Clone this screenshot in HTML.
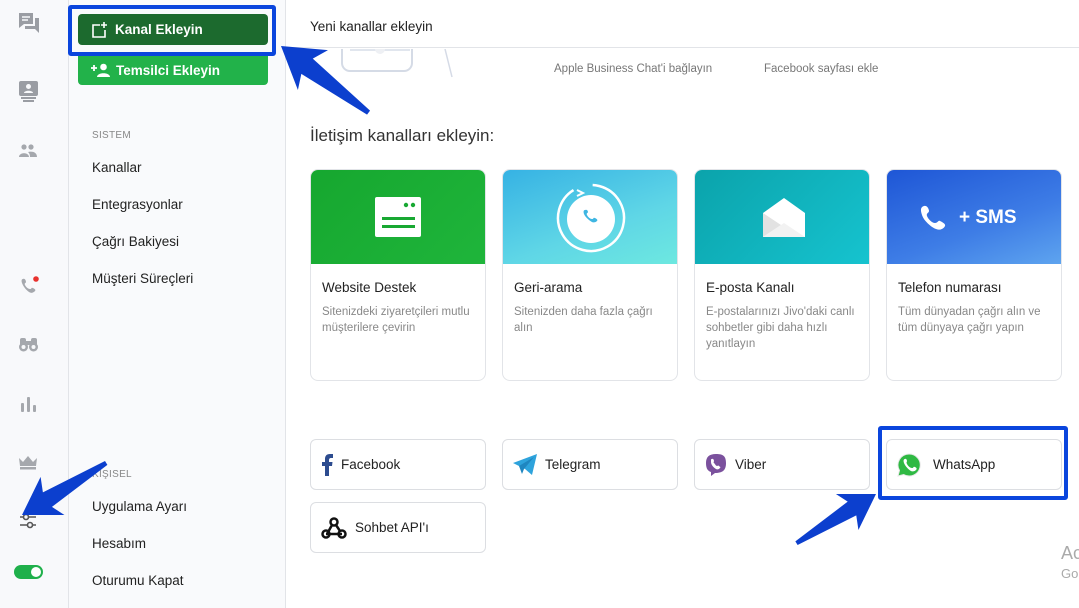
<!DOCTYPE html>
<html><head><meta charset="utf-8"><style>
*{box-sizing:border-box;margin:0;padding:0}
body{width:1079px;height:608px;overflow:hidden;position:relative;background:#fff;font-family:"Liberation Sans",sans-serif;color:#222}
.abs{position:absolute}
#rail{left:0;top:0;width:69px;height:608px;background:#f8f9fb;border-right:1px solid #e2e4e8}
#side{left:69px;top:0;width:217px;height:608px;background:#f9fafc;border-right:1px solid #e2e4e8}
.menu{position:absolute;left:23px;font-size:13.5px;color:#222}
.sec{position:absolute;left:23px;font-size:10px;color:#888;letter-spacing:.3px}
.btn{position:absolute;left:9px;width:190px;height:31px;border-radius:4px;color:#fff;font-weight:bold;font-size:13.5px;display:flex;align-items:center;padding-left:13px}
.card{position:absolute;top:169px;width:176px;height:212px;border:1px solid #e2e4e8;border-radius:8px;overflow:hidden;background:#fff}
.card .hd{height:94px;position:relative}
.card .t{position:absolute;left:11px;top:110px;font-size:13.5px;color:#222}
.card .d{position:absolute;left:11px;top:134px;font-size:11.5px;color:#888;line-height:16px;width:150px}
.sb{position:absolute;width:176px;height:51px;border:1px solid #dcdee2;border-radius:6px;background:#fff;display:flex;align-items:center;font-size:13.5px;color:#222}
.sb svg{margin:0 8px 0 10px}
</style></head><body>
<div id="rail" class="abs">
<svg class="abs" style="left:18px;top:12px" width="22" height="22" viewBox="0 0 22 22"><path d="M1 1h14v11H6l-5 4z" fill="#9a9da3"/><path d="M17 6h4v15l-4-4H7v-3h10z" fill="#9a9da3"/><path d="M4 5h8M4 8h6" stroke="#f8f9fb" stroke-width="1.5"/></svg>
<svg class="abs" style="left:19px;top:81px" width="19" height="22" viewBox="0 0 19 22"><rect x="0" y="0" width="19" height="15" rx="2" fill="#9a9da3"/><circle cx="9.5" cy="5.5" r="2.5" fill="#f8f9fb"/><path d="M5 12c0-3 9-3 9 0z" fill="#f8f9fb"/><rect x="2" y="16" width="15" height="2" fill="#9a9da3"/><rect x="4" y="19" width="11" height="2" fill="#9a9da3"/></svg>
<svg class="abs" style="left:19px;top:144px" width="18" height="14" viewBox="0 0 18 14"><circle cx="5" cy="3" r="2.6" fill="#a5a8ad"/><circle cx="12" cy="3" r="2.6" fill="#a5a8ad"/><path d="M0 13c0-5 10-5 10 0zM11 13c0-3-1-4-2-5 4-1 9 0 9 5z" fill="#a5a8ad"/></svg>
<svg class="abs" style="left:20px;top:276px" width="20" height="20" viewBox="0 0 20 20"><path d="M3 3c2-1 3 2 3 3s-2 1-1 3 3 4 5 4 1-2 3-1 3 2 2 3-3 3-6 1S3 10 2 7s0-4 1-4z" fill="#a5a8ad"/><circle cx="16" cy="3" r="2.8" fill="#e8322e"/></svg>
<svg class="abs" style="left:19px;top:337px" width="19" height="15" viewBox="0 0 19 15"><circle cx="4.5" cy="10" r="4.5" fill="#a5a8ad"/><circle cx="14.5" cy="10" r="4.5" fill="#a5a8ad"/><rect x="1" y="1" width="6" height="8" rx="2" fill="#a5a8ad"/><rect x="12" y="1" width="6" height="8" rx="2" fill="#a5a8ad"/><rect x="7" y="4" width="5" height="4" fill="#a5a8ad"/><circle cx="4.5" cy="10" r="2" fill="#f8f9fb"/><circle cx="14.5" cy="10" r="2" fill="#f8f9fb"/></svg>
<svg class="abs" style="left:20px;top:397px" width="17" height="15" viewBox="0 0 17 15"><rect x="1" y="6" width="3" height="9" rx="1" fill="#a5a8ad"/><rect x="7" y="0" width="3" height="15" rx="1" fill="#a5a8ad"/><rect x="13" y="8" width="3" height="7" rx="1" fill="#a5a8ad"/></svg>
<svg class="abs" style="left:19px;top:456px" width="18" height="14" viewBox="0 0 18 14"><path d="M0 2l4 4 5-6 5 6 4-4-1 8H1z" fill="#a5a8ad"/><rect x="1" y="11" width="16" height="2.5" fill="#a5a8ad"/></svg>
<svg class="abs" style="left:19px;top:512px" width="18" height="18" viewBox="0 0 18 18"><path d="M1 5h16M1 13h16" stroke="#555" stroke-width="1.6"/><circle cx="7" cy="5" r="2.5" fill="#f8f9fb" stroke="#555" stroke-width="1.6"/><circle cx="11" cy="13" r="2.5" fill="#f8f9fb" stroke="#555" stroke-width="1.6"/></svg>
<div class="abs" style="left:14px;top:565px;width:29px;height:14px;border-radius:7px;background:#1fb04b"><div class="abs" style="right:2px;top:2px;width:10px;height:10px;border-radius:5px;background:#fff"></div></div>
</div>
<div id="side" class="abs">
<div class="btn" style="top:14px;background:#1c6a2e"><svg width="16" height="16" viewBox="0 0 16 16" style="margin-right:8px"><path d="M9 3H2v12h12V8" fill="none" stroke="#fff" stroke-width="1.6"/><path d="M13 0v6M10 3h6" stroke="#fff" stroke-width="1.6"/></svg>Kanal Ekleyin</div>
<div class="btn" style="top:55px;height:30px;background:#22b24a;border-radius:0 0 4px 4px"><svg width="20" height="14" viewBox="0 0 20 14" style="margin-right:5px"><path d="M0 5h6M3 2v6" stroke="#fff" stroke-width="1.8"/><circle cx="12.5" cy="4" r="3.3" fill="#fff"/><path d="M6 14c0-5 13-5 13 0z" fill="#fff"/></svg>Temsilci Ekleyin</div>
<div class="sec" style="top:130px">SISTEM</div>
<div class="menu" style="top:160px">Kanallar</div>
<div class="menu" style="top:197px">Entegrasyonlar</div>
<div class="menu" style="top:234px">Çağrı Bakiyesi</div>
<div class="menu" style="top:271px">Müşteri Süreçleri</div>
<div class="sec" style="top:469px">KIŞISEL</div>
<div class="menu" style="top:499px">Uygulama Ayarı</div>
<div class="menu" style="top:536px">Hesabım</div>
<div class="menu" style="top:573px">Oturumu Kapat</div>
</div>
<!-- main -->
<div class="abs" style="left:286px;top:0;width:793px;height:48px;border-bottom:1px solid #e2e4e8;background:#fff"></div>
<div class="abs" style="left:310px;top:19px;font-size:13.5px;color:#222">Yeni kanallar ekleyin</div>
<svg class="abs" style="left:330px;top:49px" width="140" height="30" viewBox="0 0 140 30"><rect x="12" y="-12" width="70" height="34" rx="8" fill="none" stroke="#d5dbe6" stroke-width="2"/><rect x="20" y="0" width="60" height="2" fill="#e1e6ee"/><circle cx="50" cy="0" r="5" fill="#eef0f4"/><path d="M115 0l7 28" stroke="#d5dbe6" stroke-width="1.5"/></svg>
<div class="abs" style="left:554px;top:63px;font-size:11.5px;color:#777">Apple Business Chat'i bağlayın</div>
<div class="abs" style="left:764px;top:63px;font-size:11.5px;color:#777">Facebook sayfası ekle</div>
<div class="abs" style="left:310px;top:126px;font-size:17px;color:#333">İletişim kanalları ekleyin:</div>

<div class="card" style="left:310px"><div class="hd" style="background:linear-gradient(135deg,#16a72f,#1fb53b)">
<svg class="abs" style="left:64px;top:27px" width="46" height="41" viewBox="0 0 46 41"><rect width="46" height="40" rx="2" fill="#fff"/><circle cx="31" cy="8" r="2.2" fill="#18a832"/><circle cx="38" cy="8" r="2.2" fill="#18a832"/><rect x="7" y="20" width="33" height="3" fill="#18a832"/><rect x="7" y="28" width="33" height="3" fill="#18a832"/></svg></div>
<div class="t">Website Destek</div><div class="d">Sitenizdeki ziyaretçileri mutlu müşterilere çevirin</div></div>

<div class="card" style="left:502px"><div class="hd" style="background:linear-gradient(160deg,#36b2e4,#5fd6e6 60%,#6de8e0)">
<svg class="abs" style="left:52px;top:12px" width="72" height="72" viewBox="0 0 72 72"><circle cx="36" cy="36" r="33" fill="none" stroke="#fff" stroke-width="2.5" stroke-dasharray="180 20" transform="rotate(-75 36 36)"/><path d="M22 8l6 3-6 3" fill="none" stroke="#fff" stroke-width="2"/><circle cx="36" cy="37" r="24" fill="#fff"/><path d="M30 28c2-1 3 1 3 2s-2 1-1 3 3 4 5 4 1-2 3-1 3 2 2 3-3 2-5 1-7-5-8-8 0-4 1-4z" fill="#3fb6e2"/></svg></div>
<div class="t">Geri-arama</div><div class="d">Sitenizden daha fazla çağrı alın</div></div>

<div class="card" style="left:694px"><div class="hd" style="background:linear-gradient(135deg,#0ba3ab,#16c3cf)">
<svg class="abs" style="left:66px;top:27px" width="46" height="42" viewBox="0 0 46 42"><path d="M2 16L23 1l21 15v24H2z" fill="#fff"/><path d="M2 16l18 12-18 12z" fill="#e2e2e2"/><path d="M2 40l21-14 21 14z" fill="#f2f2f2"/></svg></div>
<div class="t">E-posta Kanalı</div><div class="d">E-postalarınızı Jivo'daki canlı sohbetler gibi daha hızlı yanıtlayın</div></div>

<div class="card" style="left:886px"><div class="hd" style="background:linear-gradient(160deg,#1e56d6,#3e7de6 60%,#5ea4ef)">
<svg class="abs" style="left:33px;top:34px" width="28" height="28" viewBox="0 0 28 28"><path d="M4 2c3-1 5 3 5 5s-3 2-2 5 5 7 8 7 3-3 5-2 6 3 5 5-4 5-9 3S4 17 2 11 1 3 4 2z" fill="#fff"/></svg>
<div class="abs" style="left:72px;top:37px;color:#fff;font-weight:bold;font-size:19px">+ SMS</div></div>
<div class="t">Telefon numarası</div><div class="d">Tüm dünyadan çağrı alın ve tüm dünyaya çağrı yapın</div></div>

<div class="sb" style="left:310px;top:439px"><svg width="12" height="22" viewBox="0 0 12 22" style="margin-right:8px"><path d="M8 22V12h3l.5-4H8V6c0-1 .5-2 2-2h2V0H9C5.5 0 4 2 4 5v3H1v4h3v10z" fill="#2d4c8f"/></svg>Facebook</div>
<div class="sb" style="left:502px;top:439px"><svg width="24" height="22" viewBox="0 0 24 22"><path d="M0 9L24 0 19 21 12 15z" fill="#2ea3dc"/><path d="M6 12l3 8 2-5 10-12z" fill="#1f86c0"/></svg>Telegram</div>
<div class="sb" style="left:694px;top:439px"><svg width="22" height="24" viewBox="0 0 22 24"><path d="M11 1C4 1 1 4 1 10s2 8 5 9v4l4-3c8 0 11-3 11-10S18 1 11 1z" fill="#7b519d"/><path d="M7 6c1-1 2 1 2 2s-1 1 0 2 2 3 3 3 1-1 2 0 2 1 1 2-2 2-4 1-5-4-5-7 0-3 1-3z" fill="#fff"/></svg>Viber</div>
<div class="sb" style="left:886px;top:439px"><svg width="24" height="24" viewBox="0 0 24 24" style="margin-right:12px"><path d="M12 1a11 11 0 0 0-9.5 16.5L1 23l5.7-1.5A11 11 0 1 0 12 1z" fill="#2fb943" stroke="#e8e8e8" stroke-width="1"/><path d="M8 6c1-1 2 1 2 2s-1 1 0 3 3 4 5 4 1-2 3-1 2 2 1 3-3 2-5 1-6-5-7-8 0-4 1-4z" fill="#fff"/></svg>WhatsApp</div>
<div class="sb" style="left:310px;top:502px"><svg width="26" height="22" viewBox="0 0 26 22"><circle cx="13" cy="5" r="3.5" fill="none" stroke="#111" stroke-width="2.5"/><circle cx="5" cy="17" r="3.5" fill="none" stroke="#111" stroke-width="2.5"/><circle cx="21" cy="17" r="3.5" fill="none" stroke="#111" stroke-width="2.5"/><path d="M11 8l-5 9M5 17h16M15 8l4 6" stroke="#111" stroke-width="2.5" fill="none"/></svg>Sohbet API'ı</div>

<div class="abs" style="left:1061px;top:543px;font-size:18px;color:#aaa">Ac</div>
<div class="abs" style="left:1061px;top:566px;font-size:13px;color:#aaa">Go</div>

<div class="abs" style="left:68px;top:5px;width:208px;height:51px;border:4px solid #0a45dd;border-radius:3px"></div>
<div class="abs" style="left:878px;top:426px;width:190px;height:74px;border:4px solid #0a45dd;border-radius:3px"></div>
<svg class="abs" style="left:0;top:0" width="1079" height="608" viewBox="0 0 1079 608">
<defs><polygon id="ar" points="0,0 40,-25 33,-9 110,-2 110,3 33,10 40,25" fill="#0c3fce"/></defs>
<use href="#ar" transform="translate(281,46) rotate(37)"/>
<use href="#ar" transform="translate(22,515) rotate(-32) scale(0.9)"/>
<use href="#ar" transform="translate(876,494) rotate(148) scale(0.85)"/>
</svg>
</body></html>
